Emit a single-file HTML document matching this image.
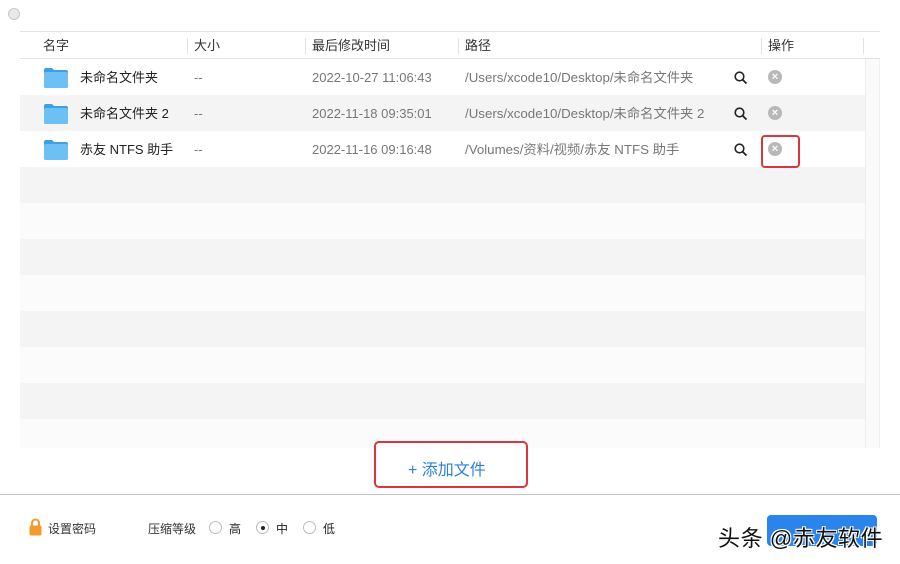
<!DOCTYPE html>
<html><head><meta charset="utf-8"><style>
*{margin:0;padding:0;box-sizing:border-box}
body{width:900px;height:564px;background:#fff;position:relative;overflow:hidden;font-family:"Liberation Sans","Noto Sans CJK SC",sans-serif;font-size:13px;color:#222}
.abs{position:absolute}
.row{position:absolute;left:20px;width:845px;height:36px}
.cell{position:absolute;top:1px;line-height:36px;white-space:nowrap}
.g{color:#777}
.p{font-size:13.3px}
.hd{position:absolute;top:31px;left:20px;width:860px;height:28px;border-top:1px solid #e4e4e4;border-bottom:1px solid #e4e4e4;background:#fff}
.hd span{position:absolute;top:0;line-height:27px;color:#333}
.sep{position:absolute;top:6px;width:1px;height:16px;background:#e2e2e2}
.folder{position:absolute;left:23px;top:8px;width:26px;height:21px}
.x{position:absolute;left:748px;top:11px;width:14px;height:14px;border-radius:50%;background:#b8b8b8;color:#fff;font-size:11px;line-height:14px;text-align:center;font-weight:bold}
</style></head><body>
<div class="abs" style="left:8px;top:8px;width:12px;height:12px;border-radius:50%;border:1px solid #c8c8c8;background:#e8e8e8"></div>
<div class="hd">
<span style="left:23px">名字</span><div class="sep" style="left:167px"></div>
<span style="left:174px">大小</span><div class="sep" style="left:285px"></div>
<span style="left:292px">最后修改时间</span><div class="sep" style="left:438px"></div>
<span style="left:445px">路径</span><div class="sep" style="left:741px"></div>
<span style="left:748px">操作</span><div class="sep" style="left:843px"></div>
</div>
<div class="abs" style="left:865px;top:59px;width:15px;height:389px;background:#fafafa;border-left:1px solid #eee;border-right:1px solid #eee"></div>
<div class="row" style="top:59px;background:#fff"></div>
<div class="row" style="top:95px;background:#f4f4f4"></div>
<div class="row" style="top:131px;background:#fff"></div>
<div class="row" style="top:167px;background:#f4f4f4"></div>
<div class="row" style="top:203px;background:#fcfbfc"></div>
<div class="row" style="top:239px;background:#f4f4f4"></div>
<div class="row" style="top:275px;background:#fcfbfc"></div>
<div class="row" style="top:311px;background:#f4f4f4"></div>
<div class="row" style="top:347px;background:#fcfbfc"></div>
<div class="row" style="top:383px;background:#f4f4f4"></div>
<div class="row" style="top:419px;height:29px;background:#fcfbfc"></div>

<div class="row" style="top:59px">
<svg class="folder" viewBox="0 0 26 21"><path d="M1 3q0-2 2-2h6l2 2h12q2 0 2 2v14q0 2-2 2H3q-2 0-2-2z" fill="#3f9fe0"/><rect x="1" y="5" width="24" height="16" rx="2" fill="#6cc0f3"/></svg>
<div class="cell" style="left:60px">未命名文件夹</div><div class="cell g" style="left:174px">--</div>
<div class="cell g" style="left:292px">2022-10-27 11:06:43</div><div class="cell g p" style="left:445px">/Users/xcode10/Desktop/未命名文件夹</div>
<svg class="abs" style="left:714px;top:12px" width="14" height="14" viewBox="0 0 14 14"><circle cx="5.5" cy="5.5" r="4.3" fill="none" stroke="#222" stroke-width="1.6"/><path d="M8.7 8.7L12.5 12.5" stroke="#222" stroke-width="1.8"/></svg>
<div class="x">×</div></div>
<div class="row" style="top:95px">
<svg class="folder" viewBox="0 0 26 21"><path d="M1 3q0-2 2-2h6l2 2h12q2 0 2 2v14q0 2-2 2H3q-2 0-2-2z" fill="#3f9fe0"/><rect x="1" y="5" width="24" height="16" rx="2" fill="#6cc0f3"/></svg>
<div class="cell" style="left:60px">未命名文件夹 2</div><div class="cell g" style="left:174px">--</div>
<div class="cell g" style="left:292px">2022-11-18 09:35:01</div><div class="cell g p" style="left:445px">/Users/xcode10/Desktop/未命名文件夹 2</div>
<svg class="abs" style="left:714px;top:12px" width="14" height="14" viewBox="0 0 14 14"><circle cx="5.5" cy="5.5" r="4.3" fill="none" stroke="#222" stroke-width="1.6"/><path d="M8.7 8.7L12.5 12.5" stroke="#222" stroke-width="1.8"/></svg>
<div class="x">×</div></div>
<div class="row" style="top:131px">
<svg class="folder" viewBox="0 0 26 21"><path d="M1 3q0-2 2-2h6l2 2h12q2 0 2 2v14q0 2-2 2H3q-2 0-2-2z" fill="#3f9fe0"/><rect x="1" y="5" width="24" height="16" rx="2" fill="#6cc0f3"/></svg>
<div class="cell" style="left:60px">赤友 NTFS 助手</div><div class="cell g" style="left:174px">--</div>
<div class="cell g" style="left:292px">2022-11-16 09:16:48</div><div class="cell g p" style="left:445px">/Volumes/资料/视频/赤友 NTFS 助手</div>
<svg class="abs" style="left:714px;top:12px" width="14" height="14" viewBox="0 0 14 14"><circle cx="5.5" cy="5.5" r="4.3" fill="none" stroke="#222" stroke-width="1.6"/><path d="M8.7 8.7L12.5 12.5" stroke="#222" stroke-width="1.8"/></svg>
<div class="x">×</div></div>
<div class="abs" style="left:761px;top:135px;width:39px;height:33px;border:2px solid #d9363e;border-radius:4px"></div>

<div class="abs" style="left:374px;top:441px;width:154px;height:47px;border:2px solid #d9363e;border-radius:5px"></div>
<div class="abs" style="left:408px;top:456px;font-size:16px;color:#2b7de1">+ 添加文件</div>
<div class="abs" style="left:0;top:494px;width:900px;height:1px;background:#c4c4c4"></div>

<svg class="abs" style="left:29px;top:518px" width="13" height="18" viewBox="0 0 13 18"><path d="M3 8V5a3.5 3.5 0 0 1 7 0v3" fill="none" stroke="#f29a2e" stroke-width="2"/><rect x="0.5" y="7.5" width="12" height="10" rx="1.5" fill="#f29a2e"/></svg>
<div class="abs" style="left:48px;top:520px;font-size:12px;color:#333">设置密码</div>
<div class="abs" style="left:148px;top:520px;font-size:12px;color:#333">压缩等级</div>
<div class="abs" style="left:209px;top:521px;width:13px;height:13px;border-radius:50%;border:1px solid #bbb"></div>
<div class="abs" style="left:229px;top:520px;font-size:12px">高</div>
<div class="abs" style="left:256px;top:521px;width:13px;height:13px;border-radius:50%;border:1px solid #bbb"><div style="margin:3.5px;width:4px;height:4px;border-radius:50%;background:#222"></div></div>
<div class="abs" style="left:276px;top:520px;font-size:12px">中</div>
<div class="abs" style="left:303px;top:521px;width:13px;height:13px;border-radius:50%;border:1px solid #bbb"></div>
<div class="abs" style="left:323px;top:520px;font-size:12px">低</div>
<div class="abs" style="left:767px;top:515px;width:110px;height:31px;background:#2b84ea;border-radius:4px"></div>
<div class="abs" style="left:718px;top:521px;font-size:22px;letter-spacing:0.6px;color:#111;white-space:nowrap;text-shadow:1px 1px 0 #fff,-1px -1px 0 #fff,1px -1px 0 #fff,-1px 1px 0 #fff">头条 @赤友软件</div>
</body></html>
